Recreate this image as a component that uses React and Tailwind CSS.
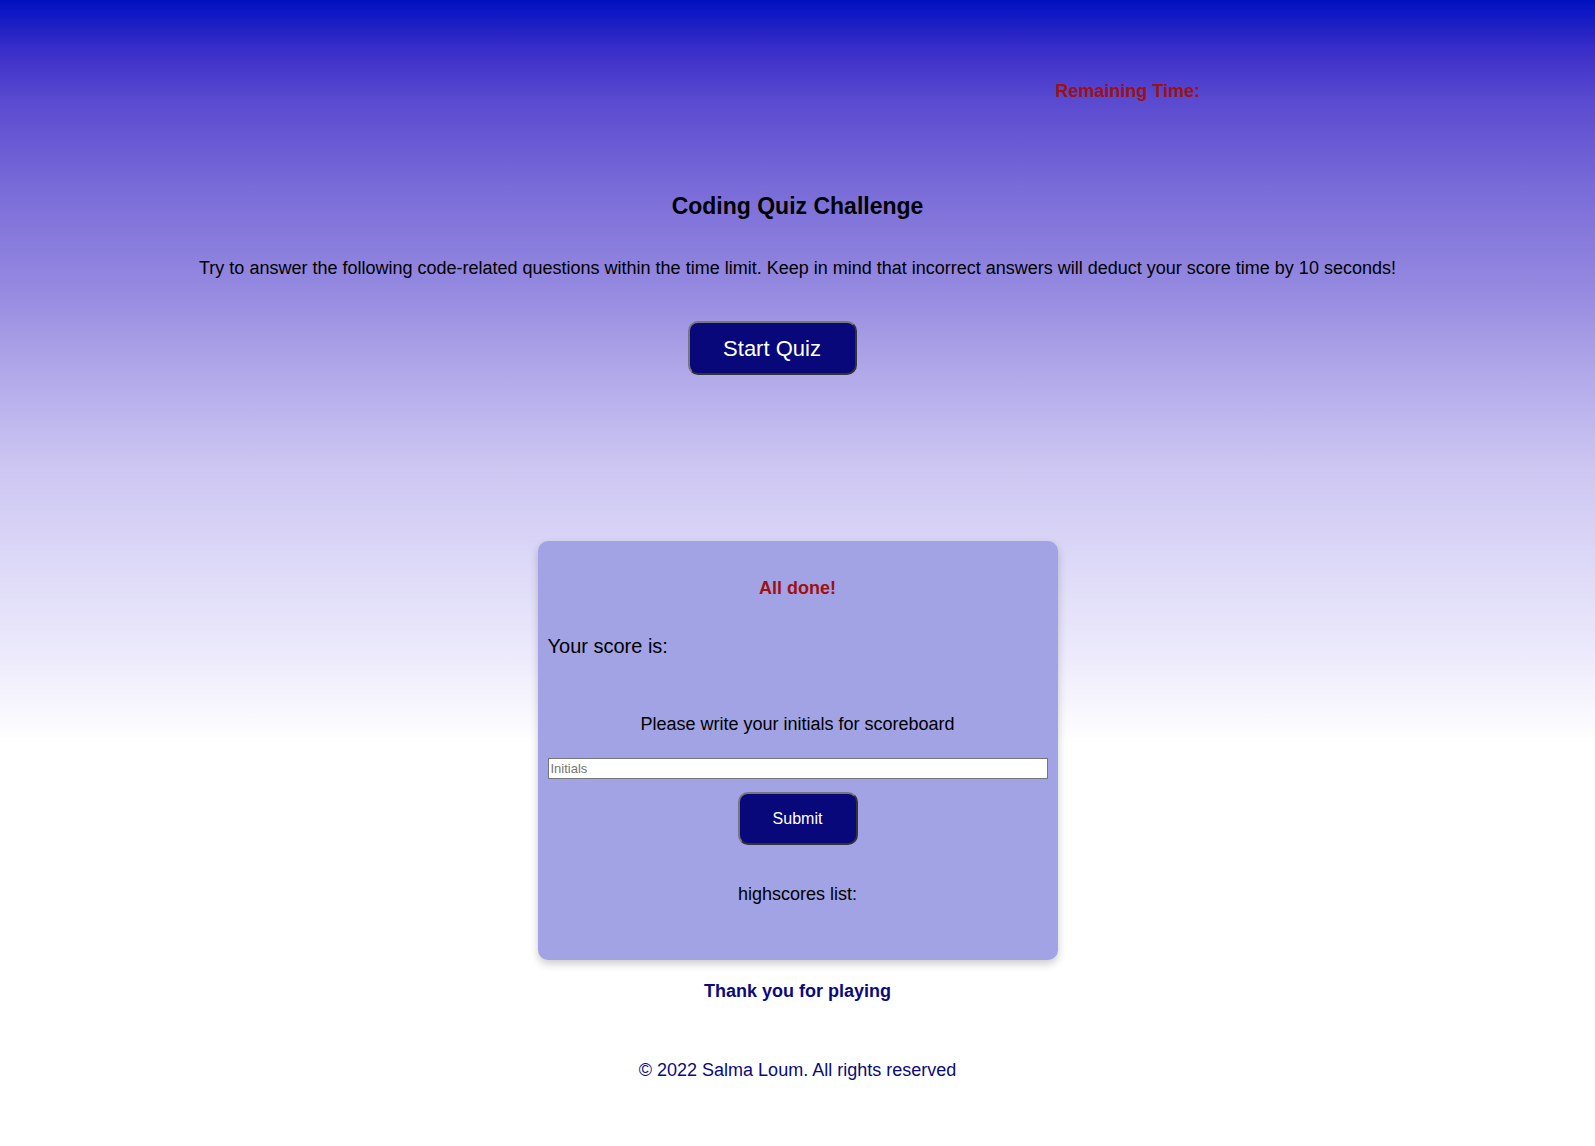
import React, { useState } from 'react';

const App = () => {
  const [initials, setInitials] = useState('');

  return (
    <div
      className="min-h-[1146px] w-full bg-[linear-gradient(to_bottom,#0010c0_0px,#3a2ec8_50px,#5a4ad0_100px,#7a6cd8_190px,#958ae0_290px,#b3abea_380px,#cdc7f2_470px,#dcd8f7_560px,#ebe9fb_650px,#ffffff_745px,#ffffff_100%)] font-['Liberation_Sans',Arial,sans-serif] text-black"
    >
      <div className="flex justify-end pr-[395px] pt-[81px]">
        <p className="text-[18px] font-bold leading-[21px] text-[#a01010]">Remaining Time:</p>
      </div>

      <div className="flex flex-col items-center pt-[91px]">
        <h1 className="text-[23px] font-bold leading-[27px]">Coding Quiz Challenge</h1>
        <p className="mt-[38px] text-[18px] leading-[21px]">
          Try to answer the following code-related questions within the time limit. Keep in mind that incorrect answers will deduct your score time by 10 seconds!
        </p>
        <button className="mr-[51px] mt-[42px] h-[54px] w-[169px] rounded-[10px] border-2 border-t-[#777] border-l-[#777] border-r-[#333] border-b-[#333] bg-[#08087a] text-[22px] text-white">
          Start Quiz
        </button>
      </div>

      <div className="mx-auto mt-[166px] flex w-[520px] flex-col rounded-[10px] bg-[#a2a3e5] px-[10px] pb-[55px] shadow-[0_4px_8px_rgba(0,0,0,0.2)]">
        <p className="mt-[37px] text-center text-[18px] font-bold leading-[21px] text-[#a01010]">All done!</p>
        <p className="mt-[35px] text-[20px] leading-[24px]">Your score is:</p>
        <p className="mt-[56px] text-center text-[18px] leading-[21px]">Please write your initials for scoreboard</p>
        <input
          type="text"
          value={initials}
          onChange={(e) => setInitials(e.target.value)}
          placeholder="Initials"
          className="mt-[23px] h-[21px] w-full border border-[#767676] bg-white px-[2px] text-[13px] placeholder:text-[#757575] focus:outline-none"
        />
        <button className="mx-auto mt-[13px] h-[53px] w-[120px] rounded-[10px] border-2 border-t-[#777] border-l-[#777] border-r-[#333] border-b-[#333] bg-[#08087a] text-[16px] text-white">
          Submit
        </button>
        <p className="mt-[39px] text-center text-[18px] leading-[21px]">highscores list:</p>
      </div>

      <p className="mt-[21px] text-center text-[18px] font-bold leading-[21px] text-[#0a0a7e]">Thank you for playing</p>
      <p className="mt-[58px] text-center text-[18px] leading-[21px] text-[#0a0a7e]">© 2022 Salma Loum. All rights reserved</p>
    </div>
  );
};

export default App;
